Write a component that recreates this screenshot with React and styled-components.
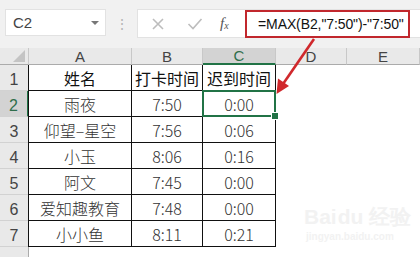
import React from "react";
import styled, { createGlobalStyle } from "styled-components";

const GlobalStyle = createGlobalStyle`
	html, body {
		margin: 0;
		padding: 0;
		background: #ffffff;
	}
	body {
		width: 420px;
		height: 257px;
		overflow: hidden;
		font-family: "Noto Sans CJK SC", "Noto Sans", sans-serif;
	}
`;

const rows = [
	["姓名", "打卡时间", "迟到时间"],
	["雨夜", "7:50", "0:00"],
	["仰望–星空", "7:56", "0:06"],
	["小玉", "8:06", "0:16"],
	["阿文", "7:45", "0:00"],
	["爱知趣教育", "7:48", "0:00"],
	["小小鱼", "8:11", "0:21"],
];

const App = () => {
	return (
		<Page>
			<GlobalStyle />
			<Toolbar>
				<NameBox>
					<span>C2</span>
					<Caret />
				</NameBox>
				<Grip>⋮</Grip>
				<FormulaBar>
					<BarIcon>
						<svg width="14" height="14" viewBox="0 0 14 14">
							<path d="M2 2 L12 12 M12 2 L2 12" stroke="#bdbdbd" strokeWidth="1.6" fill="none" />
						</svg>
					</BarIcon>
					<BarIcon>
						<svg width="16" height="14" viewBox="0 0 16 14">
							<path d="M1.5 7 L6 11.5 L14.5 2" stroke="#bdbdbd" strokeWidth="1.6" fill="none" />
						</svg>
					</BarIcon>
					<Fx>
						f<sub>x</sub>
					</Fx>
					<FormulaText>=MAX(B2,"7:50")-"7:50"</FormulaText>
				</FormulaBar>
			</Toolbar>
			<Sheet>
				<Corner>
					<svg width="12" height="12" viewBox="0 0 12 12">
						<path d="M12 0 L12 12 L0 12 Z" fill="#c4c4c4" />
					</svg>
				</Corner>
				{["A", "B", "C", "D", "E"].map((c) => (
					<ColHead key={c} $active={c === "C"}>
						{c}
					</ColHead>
				))}
				{[0, 1, 2, 3, 4, 5, 6, 7].map((r) => (
					<React.Fragment key={r}>
						<RowHead $active={r === 1}>{r < 7 ? r + 1 : ""}</RowHead>
						{[0, 1, 2].map((c) =>
							r < 7 ? (
								<Cell key={c} $first={c === 0} $head={r === 0} $selected={r === 1 && c === 2}>
									{rows[r][c]}
									{r === 1 && c === 2 && <Handle />}
								</Cell>
							) : (
								<Blank key={c} />
							)
						)}
						<Blank />
						<Blank />
					</React.Fragment>
				))}
			</Sheet>
			<Arrow width="420" height="257" viewBox="0 0 420 257">
				<line x1="314" y1="39" x2="283" y2="84" stroke="#d0282c" strokeWidth="2.6" />
				<path d="M276.5 94 L278 78.5 L289 86 Z" fill="#d0282c" />
			</Arrow>
			<Watermark>
				<div>Bai<Paw>du</Paw> 经验</div>
				<small>jingyan.baidu.com</small>
			</Watermark>
		</Page>
	);
};

const Page = styled.div`
	position: relative;
	width: 420px;
	height: 257px;
	overflow: hidden;
	background: #ffffff;
`;

const Toolbar = styled.div`
	height: 48px;
	box-sizing: border-box;
	padding: 9px 0 0 5px;
	display: flex;
	align-items: flex-start;
	background: #f1f1f1;
`;

const NameBox = styled.div`
	width: 101px;
	height: 27px;
	box-sizing: border-box;
	background: #ffffff;
	border: 1px solid #e2e2e2;
	display: flex;
	align-items: center;
	justify-content: space-between;
	padding: 0 6px 0 7px;
	font-family: "Liberation Sans", Arial, sans-serif;
	font-size: 15px;
	color: #444;
`;

const Caret = styled.span`
	width: 0;
	height: 0;
	border-left: 4px solid transparent;
	border-right: 4px solid transparent;
	border-top: 4px solid #777;
`;

const Grip = styled.div`
	width: 31px;
	height: 27px;
	display: flex;
	align-items: center;
	justify-content: center;
	color: #b5b5b5;
	font-size: 14px;
`;

const FormulaBar = styled.div`
	flex: 1;
	height: 27px;
	background: #ffffff;
	border: 1px solid #e2e2e2;
	border-right: none;
	display: flex;
	align-items: center;
	padding-left: 13px;
`;

const BarIcon = styled.span`
	width: 36px;
	display: flex;
	align-items: center;
`;

const Fx = styled.span`
	width: 25px;
	margin-left: -3px;
	font-family: "Liberation Serif", serif;
	font-style: italic;
	font-size: 15px;
	color: #555;
	sub {
		font-size: 10px;
		vertical-align: -1px;
	}
`;

const FormulaText = styled.div`
	height: 28px;
	width: 165px;
	box-sizing: border-box;
	border: 2.5px solid #c1272d;
	display: flex;
	align-items: center;
	padding-left: 11px;
	font-family: "Liberation Sans", Arial, sans-serif;
	font-size: 14px;
	letter-spacing: -0.1px;
	color: #111;
	white-space: nowrap;
`;

const Sheet = styled.div`
	display: grid;
	grid-template-columns: 29px 103px 71px 73px 71px 1fr;
	grid-template-rows: 17px repeat(7, 26px) 26px;
`;

const Corner = styled.div`
	background: #e9e9e9;
	border-right: 1px solid #c8c8c8;
	border-bottom: 1px solid #ababab;
	box-sizing: border-box;
	display: flex;
	align-items: flex-end;
	justify-content: flex-end;
	padding: 0 3px 2px 0;
`;

const ColHead = styled.div`
	box-sizing: border-box;
	background: ${(p) => (p.$active ? "#d3d3d3" : "#e9e9e9")};
	border-right: 1px solid #c8c8c8;
	border-bottom: ${(p) => (p.$active ? "2px solid #217346" : "1px solid #ababab")};
	display: flex;
	align-items: center;
	justify-content: center;
	font-family: "Liberation Sans", Arial, sans-serif;
	font-size: 15px;
	color: ${(p) => (p.$active ? "#2f6e4b" : "#444")};
`;

const RowHead = styled.div`
	box-sizing: border-box;
	background: ${(p) => (p.$active ? "#d3d3d3" : "#e9e9e9")};
	border-bottom: 1px solid #d2d2d2;
	border-right: ${(p) => (p.$active ? "2px solid #217346" : "1px solid #ababab")};
	display: flex;
	align-items: flex-end;
	justify-content: center;
	padding-bottom: 1px;
	font-family: "Liberation Sans", Arial, sans-serif;
	font-size: 16px;
	color: ${(p) => (p.$active ? "#2f6e4b" : "#444")};
`;

const Cell = styled.div`
	position: relative;
	box-sizing: border-box;
	border-right: 1px solid #111;
	border-bottom: 1px solid #111;
	border-left: ${(p) => (p.$first ? "1px solid #111" : "none")};
	margin-left: ${(p) => (p.$first ? "-1px" : "0")};
	display: flex;
	align-items: center;
	justify-content: center;
	padding-top: 1px;
	font-family: "Noto Sans CJK SC", "Noto Sans", sans-serif;
	font-size: 16px;
	font-weight: ${(p) => (p.$head ? 400 : 300)};
	color: ${(p) => (p.$head ? "#111" : "#333")};
	&::after {
		content: "";
		display: ${(p) => (p.$selected ? "block" : "none")};
		position: absolute;
		left: -1px;
		top: -1px;
		right: -1px;
		bottom: -1px;
		border: 2px solid #217346;
	}
`;

const Handle = styled.span`
	position: absolute;
	right: -4px;
	bottom: -4px;
	width: 6px;
	height: 6px;
	background: #217346;
	border: 1px solid #ffffff;
	z-index: 2;
`;

const Blank = styled.div`
	background: #ffffff;
`;

const Arrow = styled.svg`
	position: absolute;
	left: 0;
	top: 0;
	pointer-events: none;
`;

const Watermark = styled.div`
	position: absolute;
	left: 304px;
	top: 206px;
	color: #f2f2f2;
	font-family: "Liberation Sans", Arial, sans-serif;
	font-size: 21px;
	font-weight: 700;
	line-height: 22px;
	small {
		display: block;
		font-size: 10px;
		line-height: 12px;
		margin-top: 3px;
		padding-left: 2px;
	}
`;

const Paw = styled.span`
	margin-left: 1px;
`;

export default App;
